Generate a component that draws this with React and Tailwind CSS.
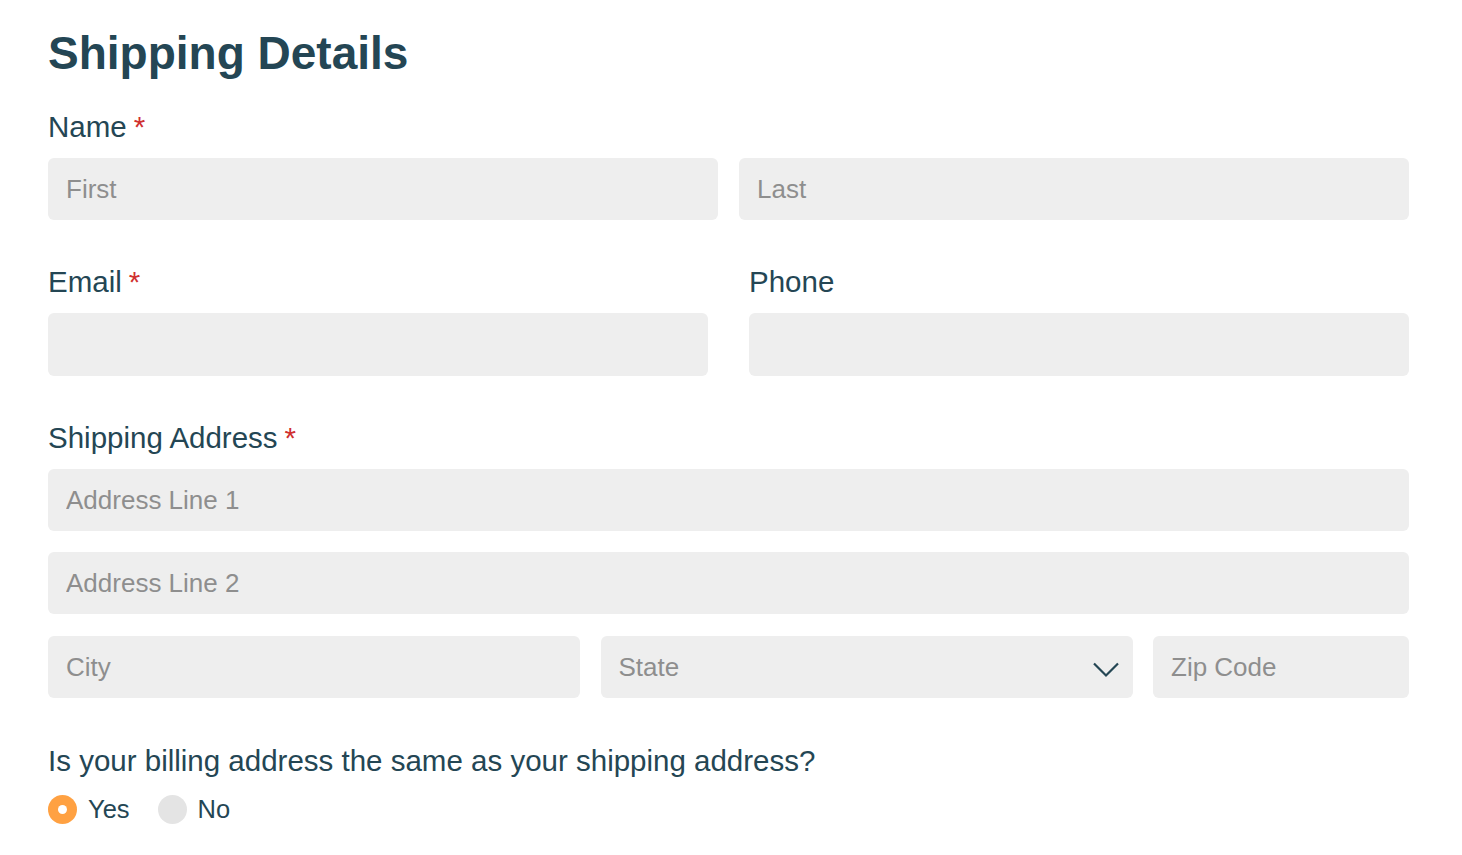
import React from "react";

const font = { fontFamily: '"Liberation Sans", Arial, sans-serif' };

function Label({ children, required }) {
  return (
    <div className="text-[29.5px] leading-[34px] text-[#244654] mb-[14px] whitespace-nowrap">
      {children}
      {required && <span className="text-[#d0302f] ml-[7px]">*</span>}
    </div>
  );
}

function Input({ placeholder, className = "" }) {
  return (
    <input
      type="text"
      placeholder={placeholder}
      className={
        "h-[62px] rounded-[6px] bg-[#eeeeee] px-[18px] text-[26px] text-[#244654] placeholder:text-[#8e8e8e] outline-none min-w-0 " +
        className
      }
      style={font}
    />
  );
}

export default function App() {
  return (
    <div className="bg-white min-h-[855px] w-[1462px] pl-[48px] pr-[53px] pt-[27px]" style={font}>
      <h1 className="text-[46px] leading-[52px] font-bold text-[#244654] m-0">Shipping Details</h1>

      <div className="mt-[31px]">
        <Label required>Name</Label>
        <div className="grid grid-cols-2 gap-[21px]">
          <Input placeholder="First" />
          <Input placeholder="Last" />
        </div>
      </div>

      <div className="mt-[45px] grid grid-cols-2 gap-[41px]">
        <div className="flex flex-col">
          <Label required>Email</Label>
          <Input placeholder="" className="h-[63px]" />
        </div>
        <div className="flex flex-col">
          <Label>Phone</Label>
          <Input placeholder="" className="h-[63px]" />
        </div>
      </div>

      <div className="mt-[45px] flex flex-col">
        <Label required>Shipping Address</Label>
        <Input placeholder="Address Line 1" />
        <Input placeholder="Address Line 2" className="mt-[21px]" />
        <div className="mt-[22px] grid grid-cols-[532px_532px_256px] justify-between">
          <Input placeholder="City" />
          <div className="relative h-[62px] rounded-[6px] bg-[#eeeeee] flex items-center px-[18px]">
            <span className="text-[26px] text-[#8e8e8e]">State</span>
            <svg
              className="absolute left-[492px] top-[26px]"
              width="26"
              height="16"
              viewBox="0 0 26 16"
              fill="none"
            >
              <path d="M1 1.5 L13 13.5 L25 1.5" stroke="#244654" strokeWidth="2.2" />
            </svg>
          </div>
          <Input placeholder="Zip Code" />
        </div>
      </div>

      <div className="mt-[46px] text-[29.5px] leading-[34px] text-[#244654] whitespace-nowrap">
        Is your billing address the same as your shipping address?
      </div>

      <div className="mt-[17px] flex items-center">
        <div className="flex items-center gap-[11px]">
          <span className="w-[29px] h-[29px] rounded-full bg-[#ffa142] flex items-center justify-center">
            <span className="w-[9px] h-[9px] rounded-full bg-white" />
          </span>
          <span className="text-[25.5px] leading-[29px] text-[#244654]">Yes</span>
        </div>
        <div className="flex items-center gap-[11px] ml-[28px]">
          <span className="w-[29px] h-[29px] rounded-full bg-[#e4e4e4]" />
          <span className="text-[25.5px] leading-[29px] text-[#244654]">No</span>
        </div>
      </div>
    </div>
  );
}
